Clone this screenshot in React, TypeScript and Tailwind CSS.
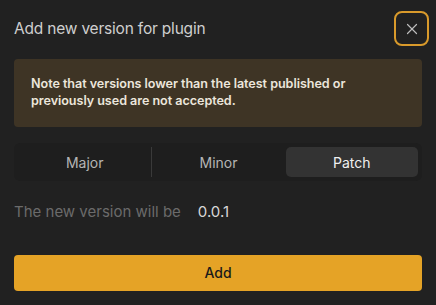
import { X } from 'lucide-react';
import { useState } from 'react';

const TABS = ['Major', 'Minor', 'Patch'];

export default function App() {
  const [tab, setTab] = useState('Patch');

  return (
    <div className="w-[436px] h-[305px] bg-[#212121] px-[14px] font-['Inter',sans-serif] flex flex-col">
      {/* Header */}
      <div className="flex items-center justify-between pt-[11px] h-[46px]">
        <div className="text-[15.5px] text-[#cfcfcf] tracking-[-0.2px]">Add new version for plugin</div>
        <button className="w-[35px] h-[35px] -mr-[7px] rounded-[8px] border-2 border-[#d99a2b] flex items-center justify-center text-[#bdbdbd]">
          <X size={18} strokeWidth={1.6} />
        </button>
      </div>

      {/* Note */}
      <div className="mt-[13px] h-[68px] rounded-[4px] bg-[#3e3425] px-[17px] pt-[16px] text-[12.6px] font-semibold leading-[17px] tracking-[-0.05px] text-[#ece6dc]">
        Note that versions lower than the latest published or previously used are not accepted.
      </div>

      {/* Segmented */}
      <div className="mt-[16px] h-[38px] rounded-[6px] bg-[#1e1e1e] p-[4px] flex items-stretch">
        {TABS.map((t, i) => (
          <div key={t} className="flex-1 flex items-stretch">
            {i > 0 && (
              <div className={'w-px ' + (tab === t || tab === TABS[i - 1] ? 'bg-transparent' : 'bg-[#3a3a3a]')} />
            )}
            <button
              onClick={() => setTab(t)}
              className={
                'flex-1 rounded-[5px] text-[14px] ' +
                (tab === t ? 'bg-[#333333] text-[#f0f0f0]' : 'text-[#b5b5b5]')
              }
            >
              {t}
            </button>
          </div>
        ))}
      </div>

      {/* Result */}
      <div className="mt-[20px] flex items-center text-[15px]">
        <span className="text-[#6b6b6b]">The new version will be</span>
        <span className="ml-[17px] text-[#d8d8d8]">0.0.1</span>
      </div>

      {/* CTA */}
      <button className="mt-[31px] h-[36px] w-full rounded-[4px] bg-[#e5a326] text-[14px] font-medium text-[#1a1a1a]">
        Add
      </button>
    </div>
  );
}
